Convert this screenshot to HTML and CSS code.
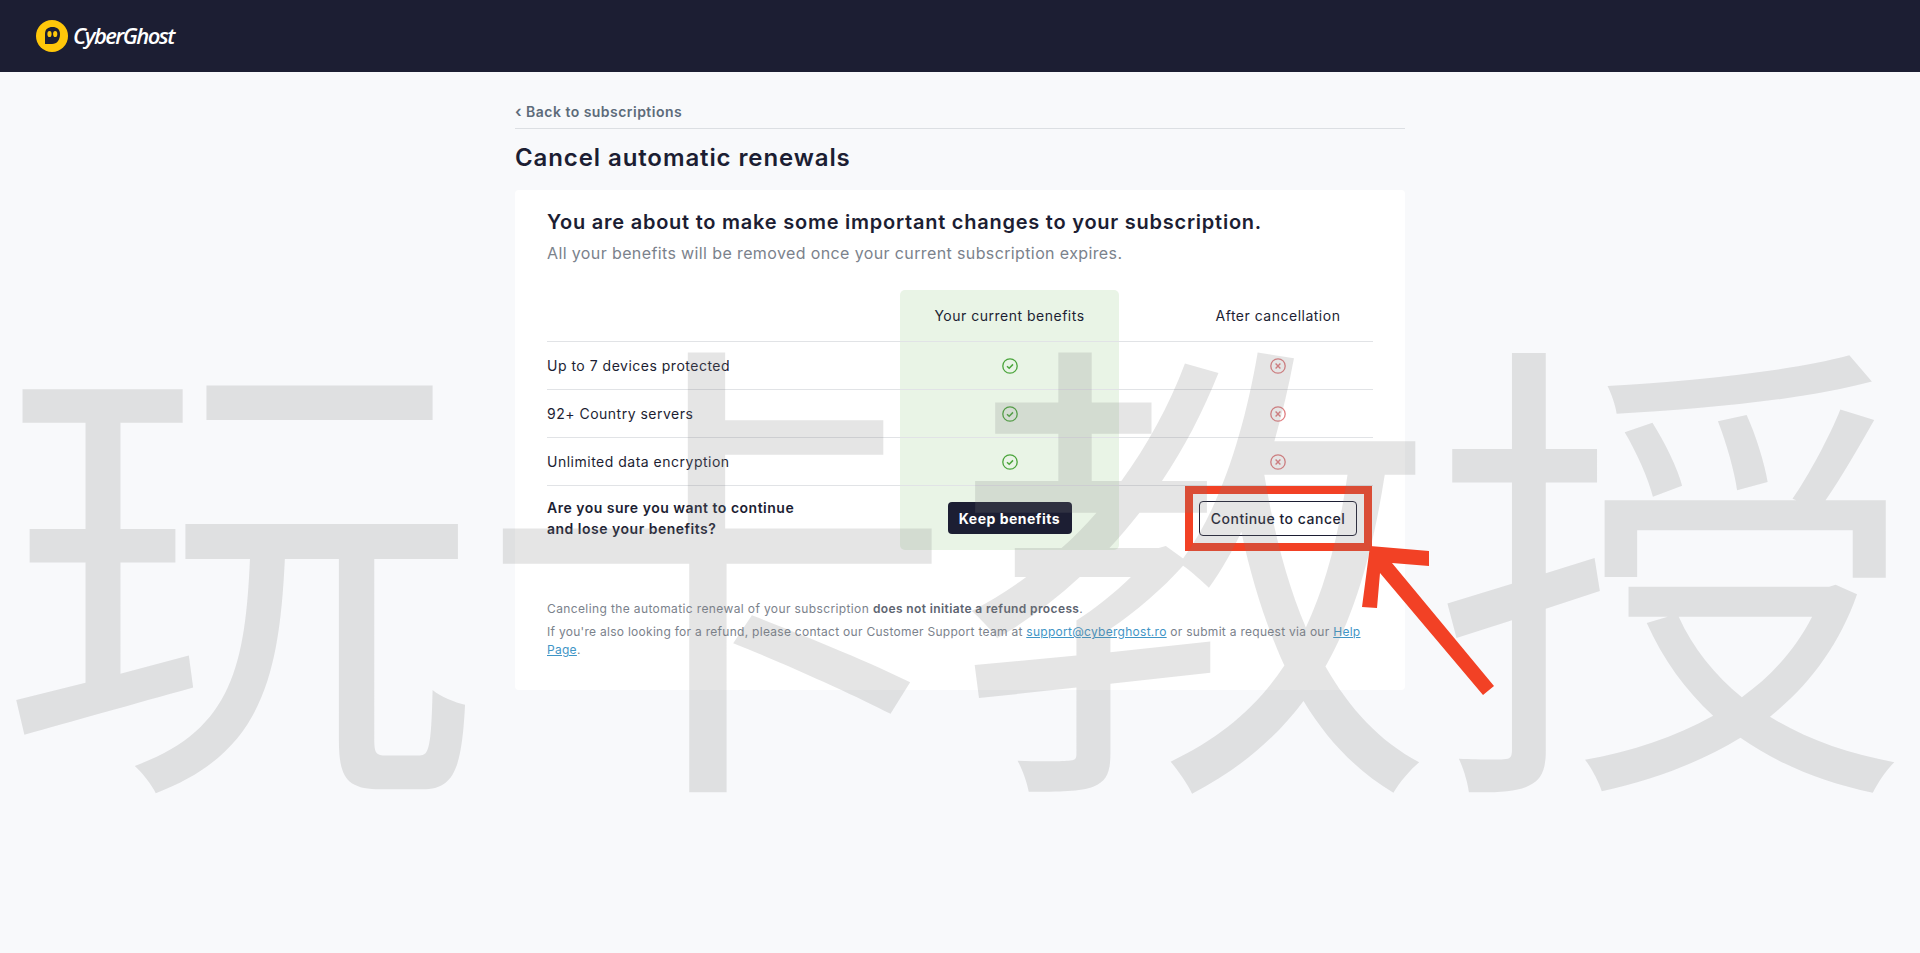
FILE: index.html
```html
<!DOCTYPE html>
<html lang="en">
<head>
  <meta charset="UTF-8" />
  <title>Cancel automatic renewals - CyberGhost</title>
  <link rel="stylesheet" href="styles.css">
</head>
<body>
  <header class="topo">
    <div class="logo">
      <svg class="logo-icone" viewBox="0 0 32 32" width="32" height="32">
        <circle cx="16" cy="16" r="16" fill="#ffc70a"/>
        <path d="M9 24 V14 C9 9 12 7 16.5 7 C21 7 24 9.5 24 14 C24 20 21 24 16 24 Z" fill="#1c1e33"/>
        <ellipse cx="13.5" cy="14" rx="2.1" ry="3.1" fill="#ffc70a"/>
        <ellipse cx="19.2" cy="14" rx="2.1" ry="3.1" fill="#ffc70a"/>
      </svg>
      <span class="logo-texto">CyberGhost</span>
    </div>
  </header>

  <main class="conteudo">
    <a class="voltar" href="#"><span class="seta">‹</span> Back to subscriptions</a>
    <h1>Cancel automatic renewals</h1>

    <section class="cartao">
      <h2>You are about to make some important changes to your subscription.</h2>
      <p class="sub">All your benefits will be removed once your current subscription expires.</p>

      <div class="tabela">
        <div class="linha cabeca">
          <div class="rotulo"></div>
          <div class="atual">Your current benefits</div>
          <div class="depois">After cancellation</div>
        </div>
        <div class="linha item">
          <div class="rotulo">Up to 7 devices protected</div>
          <div class="atual">
            <svg class="icone" viewBox="0 0 16 16"><circle cx="8" cy="8" r="7.2" fill="none" stroke="#4ba53c" stroke-width="1.3"/><path d="M5 8.2 L7.2 10.2 L11 6.4" fill="none" stroke="#4ba53c" stroke-width="1.5"/></svg>
          </div>
          <div class="depois">
            <svg class="icone" viewBox="0 0 16 16"><circle cx="8" cy="8" r="7.2" fill="none" stroke="#e07f82" stroke-width="1.3"/><path d="M5.6 5.6 L10.4 10.4 M10.4 5.6 L5.6 10.4" stroke="#e07f82" stroke-width="1.4"/></svg>
          </div>
        </div>
        <div class="linha item">
          <div class="rotulo">92+ Country servers</div>
          <div class="atual">
            <svg class="icone" viewBox="0 0 16 16"><circle cx="8" cy="8" r="7.2" fill="none" stroke="#4ba53c" stroke-width="1.3"/><path d="M5 8.2 L7.2 10.2 L11 6.4" fill="none" stroke="#4ba53c" stroke-width="1.5"/></svg>
          </div>
          <div class="depois">
            <svg class="icone" viewBox="0 0 16 16"><circle cx="8" cy="8" r="7.2" fill="none" stroke="#e07f82" stroke-width="1.3"/><path d="M5.6 5.6 L10.4 10.4 M10.4 5.6 L5.6 10.4" stroke="#e07f82" stroke-width="1.4"/></svg>
          </div>
        </div>
        <div class="linha item">
          <div class="rotulo">Unlimited data encryption</div>
          <div class="atual">
            <svg class="icone" viewBox="0 0 16 16"><circle cx="8" cy="8" r="7.2" fill="none" stroke="#4ba53c" stroke-width="1.3"/><path d="M5 8.2 L7.2 10.2 L11 6.4" fill="none" stroke="#4ba53c" stroke-width="1.5"/></svg>
          </div>
          <div class="depois">
            <svg class="icone" viewBox="0 0 16 16"><circle cx="8" cy="8" r="7.2" fill="none" stroke="#e07f82" stroke-width="1.3"/><path d="M5.6 5.6 L10.4 10.4 M10.4 5.6 L5.6 10.4" stroke="#e07f82" stroke-width="1.4"/></svg>
          </div>
        </div>
        <div class="linha acoes">
          <div class="rotulo forte">Are you sure you want to continue<br>and lose your benefits?</div>
          <div class="atual"><button class="botao manter">Keep benefits</button></div>
          <div class="depois"><button class="botao continuar">Continue to cancel</button></div>
        </div>
      </div>

      <p class="nota nota-1">Canceling the automatic renewal of your subscription <b>does not initiate a refund process</b>.</p>
      <p class="nota nota-2">If you're also looking for a refund, please contact our Customer Support team at <a href="#">support@cyberghost.ro</a> or submit a request via our <a href="#">Help Page</a>.</p>
    </section>
  </main>

  <!-- marcacao vermelha sobre o botao -->
  <div class="caixa-vermelha"></div>
  <svg class="seta-vermelha" viewBox="0 0 1920 953" width="1920" height="953">
    <polygon points="1370,546 1429,551 1429,566 1392,563 1494,686 1483,695 1380,573 1377,608 1362,607" fill="#f24125"/>
  </svg>

  <div class="marca">
    <span>玩</span><span>卡</span><span>教</span><span>授</span>
  </div>
</body>
</html>
```

FILE: styles.css
```css
html, body {
  margin: 0;
  padding: 0;
  height: 953px;
  overflow: hidden;
  background: #f8f9fb;
  color: #1c1e33;
  font-family: 'Inter', 'Open Sans', sans-serif;
}

.topo {
  height: 72px;
  background: #1c1e33;
  display: flex;
  align-items: center;
  padding-left: 36px;
}

.logo {
  display: flex;
  align-items: center;
  gap: 5px;
}

.logo-texto {
  padding-bottom: 2px;
  font-family: 'Open Sans', sans-serif;
  font-style: italic;
  font-weight: 600;
  font-size: 22px;
  letter-spacing: -1.55px;
  color: #fff;
}

.conteudo {
  width: 890px;
  margin: 0 auto;
  padding-top: 31px;
}

.voltar {
  display: block;
  height: 25px;
  line-height: 16px;
  border-bottom: 1px solid #dcdfe3;
  color: #5d6b7a;
  font-size: 14px;
  font-weight: 600;
  letter-spacing: 0.47px;
  text-decoration: none;
}

.seta {
  font-size: 16px;
}

h1 {
  margin: 14px 0 17px;
  font-size: 24px;
  line-height: 30px;
  font-weight: 600;
  letter-spacing: 0.9px;
}

.cartao {
  height: 500px;
  box-sizing: border-box;
  background: #fff;
  padding: 18px 32px 0;
  border-radius: 4px;
}

h2 {
  margin: 0;
  font-size: 20px;
  line-height: 28px;
  font-weight: 600;
  letter-spacing: 0.76px;
}

.sub {
  margin: 6px 0 26px;
  font-size: 16px;
  line-height: 22px;
  letter-spacing: 0.38px;
  color: #7b828c;
}

.linha {
  display: grid;
  grid-template-columns: 353px 219px 254px;
  font-size: 14px;
  letter-spacing: 0.5px;
}

.linha > div {
  display: flex;
  align-items: center;
  justify-content: center;
}

.linha .rotulo {
  justify-content: flex-start;
}

.linha .depois {
  padding-left: 64px;
}

.atual {
  background: #e9f4e6;
}

.cabeca {
  height: 51px;
}

.cabeca .atual {
  border-radius: 5px 5px 0 0;
}

.item {
  height: 48px;
}

.item > div, .acoes > div {
  box-sizing: border-box;
  border-top: 1px solid #e1e3e6;
}

.acoes {
  height: 65px;
}

.acoes .atual {
  border-radius: 0 0 5px 5px;
}

.forte {
  font-weight: 600;
  line-height: 21px;
}

.icone {
  width: 16px;
  height: 16px;
}

.botao {
  font-family: inherit;
  font-size: 14px;
  letter-spacing: 0.5px;
  border-radius: 4px;
  box-sizing: border-box;
  cursor: pointer;
}

.manter {
  width: 124px;
  height: 32px;
  background: #1c1e33;
  color: #fff;
  border: none;
  font-weight: 700;
}

.continuar {
  width: 158px;
  height: 35px;
  background: #fff;
  color: #1c1e33;
  border: 1px solid #1c1e33;
  font-weight: 500;
}

.nota {
  margin: 0;
  font-size: 12px;
  line-height: 18px;
  letter-spacing: 0.38px;
  color: #7b828c;
}

.nota-1 {
  margin: 50px 0 5px;
}

.nota-2 {
  letter-spacing: 0.28px;
}

.nota b {
  font-weight: 600;
  color: #5d6470;
}

.nota a {
  color: #3f95c6;
}

/* anotacoes por cima da pagina */
.caixa-vermelha {
  position: absolute;
  left: 1185px;
  top: 486px;
  width: 187px;
  height: 65px;
  box-sizing: border-box;
  border: 8px solid #f24125;
}

.seta-vermelha {
  position: absolute;
  left: 0;
  top: 0;
  pointer-events: none;
}

.marca {
  position: absolute;
  left: 0;
  top: 266px;
  display: flex;
  font-family: 'Noto Sans CJK SC', sans-serif;
  font-size: 478px;
  line-height: 560px;
  color: rgba(125, 125, 125, 0.2);
  pointer-events: none;
}
```
